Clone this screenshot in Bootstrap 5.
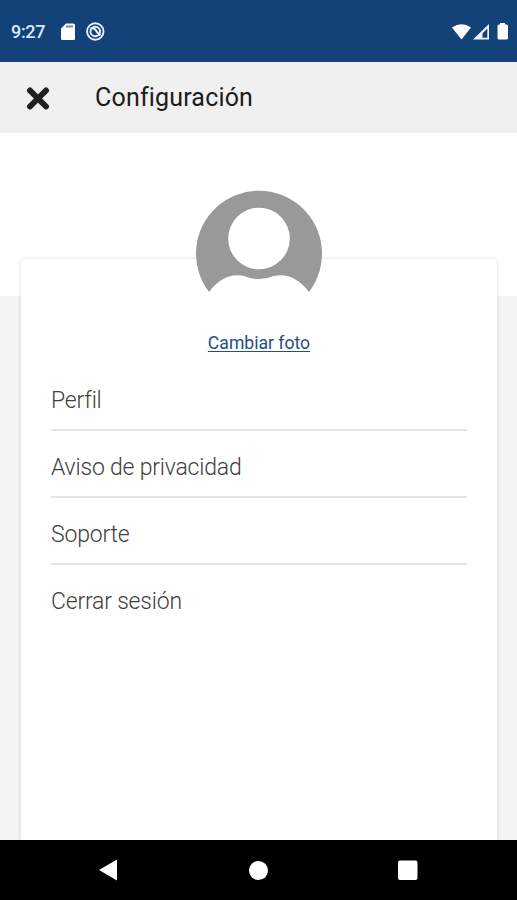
<!DOCTYPE html>
<html lang="es">
<head>
<meta charset="utf-8">
<meta name="viewport" content="width=device-width, initial-scale=1">
<title>Configuración</title>
<link href="https://cdn.jsdelivr.net/npm/bootstrap@5.3.0/dist/css/bootstrap.min.css" rel="stylesheet">
<style>
body { font-family: Roboto, "Liberation Sans", sans-serif; background: #f4f4f4; }
svg { display: block; }
.screen { height: 900px; }
.status-bar { height: 62px; background: #134279; color: #dce8f8; padding: 2px 8px 0 11px; }
.clock { font-size: 18px; line-height: 22px; width: 48px; font-weight: 500; letter-spacing: -.35px; }
.app-bar { height: 71px; background: #f0f0f0; padding-left: 26px; }
.app-title { font-size: 25px; line-height: 30px; margin-left: 45px; padding-top: 1px; color: #1c1c1c; letter-spacing: .18px; }
.content-area { background: linear-gradient(#fff 163px, #f4f4f4 163px); padding: 126px 20px 0 21px; }
.settings-card { border-radius: 4px 4px 0 0; box-shadow: 0 0 4px rgba(0,0,0,.15); padding: 0 30px; }
.avatar { margin-top: -69px; }
.photo-link { font-size: 17.6px; line-height: 22px; margin-top: 40px; color: #245080; text-underline-offset: 2px; text-decoration-thickness: 1px; }
.menu-row { height: 66.7px; padding: 0 0 14px; font-size: 23px; line-height: 28px; letter-spacing: -.2px; font-weight: 300; color: #404040; border-bottom: 2px solid #e4e4e4; }
.menu-row:last-child { border-bottom-color: transparent; }
.menu-list { margin-top: 10.8px; }
.android-nav { height: 60px; background: #000; padding: 0 99px 0 98px; }
</style>
</head>
<body>
<div class="screen d-flex flex-column overflow-hidden">
  <div class="status-bar d-flex align-items-center flex-shrink-0">
    <span class="clock">9:27</span>
    <svg width="50" height="22" viewBox="0 0 50 22" aria-hidden="true">
      <path d="M7 2.500h7.500q1.500 0 1.500 1.500v13.500q0 1.500-1.500 1.500H3.500Q2 19 2 17.500V7.500z" fill="#fff"/>
      <path d="M7 5.500h7" stroke="#718cae" stroke-width="2"/>
      <circle cx="36.300" cy="10.500" r="8.200" fill="none" stroke="#e8f1fc" stroke-width="1.900"/>
      <circle cx="36.300" cy="10.500" r="4.800" fill="none" stroke="#e8f1fc" stroke-width="1.900"/>
      <path d="M31.500 7.500q4-1 5.500 2t4.500 5" fill="none" stroke="#e8f1fc" stroke-width="2"/>
    </svg>
    <svg class="ms-auto" width="57" height="20" viewBox="0 0 57 20" aria-hidden="true">
      <path d="M0 5.500Q9.500-1 19 5.500L9.500 17.500z" fill="#fff"/>
      <path d="M37 2v15.500H21z" fill="#eef4fb"/>
      <path d="M35.300 6.500v9.300h-4.800v-4.600z" fill="#134279"/>
      <path d="M48 2.500V1h5v1.500h1.500q1.500 0 1.500 1.500v12q0 1.500-1.500 1.500h-7.500q-1.500 0-1.500-1.500V4q0-1.500 1.500-1.500z" fill="#fff"/>
    </svg>
  </div>
  <header class="app-bar d-flex align-items-center flex-shrink-0">
    <button class="btn p-0 border-0" type="button" aria-label="Cerrar">
      <svg width="24" height="24" viewBox="0 0 24 24"><path d="M4 4.500l16 16M20 4.500l-16 16" stroke="#202020" stroke-width="6" stroke-linecap="round"/></svg>
    </button>
    <h1 class="app-title mb-0 fw-normal">Configuración</h1>
  </header>
  <main class="content-area flex-grow-1 d-flex flex-column">
    <section class="settings-card bg-white flex-grow-1">
      <div class="d-flex flex-column align-items-center">
        <svg class="avatar" width="126" height="102" viewBox="0 0 126 102" aria-hidden="true">
          <path d="M13 102A63 63 0 1 1 113 102C103 88 90 83 78 86Q63 92 48 86C36 83 23 88 13 102z" fill="#999"/>
          <circle cx="63" cy="48.500" r="30.800" fill="#fff"/>
        </svg>
        <a class="photo-link" href="#">Cambiar foto</a>
      </div>
      <div class="menu-list d-flex flex-column">
        <a href="#" class="menu-row d-flex align-items-end text-decoration-none">Perfil</a>
        <a href="#" class="menu-row d-flex align-items-end text-decoration-none">Aviso de privacidad</a>
        <a href="#" class="menu-row d-flex align-items-end text-decoration-none">Soporte</a>
        <a href="#" class="menu-row d-flex align-items-end text-decoration-none">Cerrar sesión</a>
      </div>
    </section>
  </main>
  <nav class="android-nav d-flex align-items-center justify-content-between flex-shrink-0">
    <svg width="20" height="22" viewBox="0 0 20 22"><path d="M1 11L19 .5v21z" fill="#fff"/></svg>
    <svg width="20" height="20" viewBox="0 0 20 20"><circle cx="10.500" cy="10.500" r="9.500" fill="#fff"/></svg>
    <svg width="20" height="20" viewBox="0 0 20 20"><rect y=".5" width="19.500" height="19.500" rx="2" fill="#fff"/></svg>
  </nav>
</div>
<script src="https://cdn.jsdelivr.net/npm/bootstrap@5.3.0/dist/js/bootstrap.bundle.min.js"></script>
</body>
</html>
